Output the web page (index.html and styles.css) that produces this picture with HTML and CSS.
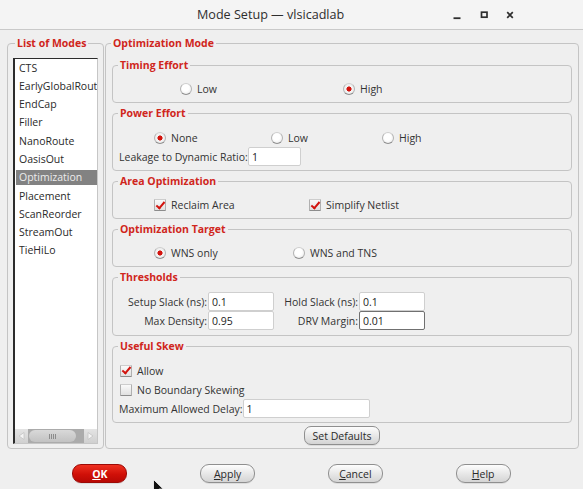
FILE: index.html
```html
<!DOCTYPE html>
<html lang="en">
<head>
<meta charset="utf-8">
<title>Mode Setup</title>
<link rel="stylesheet" href="styles.css">
</head>
<body>
<div class="window">
  <header class="titlebar">
    <div class="title">Mode Setup — vlsicadlab</div>
    <div class="controls">
      <svg class="ctl" width="16" height="16" viewBox="0 0 16 16"><path d="M4.5 11.2H11.5" stroke="#2e2e2e" stroke-width="1.8"/></svg>
      <svg class="ctl" width="16" height="16" viewBox="0 0 16 16"><rect x="5.5" y="5.2" width="5.5" height="5" fill="none" stroke="#2e2e2e" stroke-width="1.7"/></svg>
      <svg class="ctl" width="16" height="16" viewBox="0 0 16 16"><path d="M5.2 5.2L10.8 10.8M10.8 5.2L5.2 10.8" stroke="#2e2e2e" stroke-width="1.7"/></svg>
    </div>
  </header>

  <main class="content">
    <fieldset class="group modes">
      <legend>List of Modes</legend>
      <div class="listbox">
        <ul class="items">
          <li>CTS</li>
          <li>EarlyGlobalRoute</li>
          <li>EndCap</li>
          <li>Filler</li>
          <li>NanoRoute</li>
          <li>OasisOut</li>
          <li class="selected">Optimization</li>
          <li>Placement</li>
          <li>ScanReorder</li>
          <li>StreamOut</li>
          <li>TieHiLo</li>
        </ul>
        <div class="hscroll">
          <div class="arrow"><svg width="7" height="8" viewBox="0 0 7 8"><path d="M6 0.5L1 4L6 7.5Z" fill="#f4f4f4" stroke="#c4c4c4" stroke-width="0.8"/></svg></div>
          <div class="track"><div class="thumb"><span class="grip"></span></div></div>
          <div class="arrow"><svg width="7" height="8" viewBox="0 0 7 8"><path d="M1 0.5L6 4L1 7.5Z" fill="#f4f4f4" stroke="#c4c4c4" stroke-width="0.8"/></svg></div>
        </div>
      </div>
    </fieldset>

    <fieldset class="group optmode">
      <legend>Optimization Mode</legend>

      <fieldset class="sub first">
        <legend>Timing Effort</legend>
        <div class="row opts timing">
          <span class="radio">Low</span>
          <span class="radio on">High</span>
        </div>
      </fieldset>

      <fieldset class="sub tall">
        <legend>Power Effort</legend>
        <div class="row opts power">
          <span class="radio on">None</span>
          <span class="radio">Low</span>
          <span class="radio">High</span>
        </div>
        <div class="row form">
          <label class="lbl leak">Leakage to Dynamic Ratio:</label>
          <input class="field w-leak" value="1">
        </div>
      </fieldset>

      <fieldset class="sub">
        <legend>Area Optimization</legend>
        <div class="row opts area">
          <span class="check on">Reclaim Area</span>
          <span class="check on">Simplify Netlist</span>
        </div>
      </fieldset>

      <fieldset class="sub">
        <legend>Optimization Target</legend>
        <div class="row opts target">
          <span class="radio on">WNS only</span>
          <span class="radio">WNS and TNS</span>
        </div>
      </fieldset>

      <fieldset class="sub thresholds">
        <legend>Thresholds</legend>
        <div class="grid4">
          <label class="lbl r">Setup Slack (ns):</label>
          <input class="field" value="0.1">
          <label class="lbl r">Hold Slack (ns):</label>
          <input class="field" value="0.1">
          <label class="lbl r">Max Density:</label>
          <input class="field" value="0.95">
          <label class="lbl r">DRV Margin:</label>
          <input class="field focused" value="0.01">
        </div>
      </fieldset>

      <fieldset class="sub skew">
        <legend>Useful Skew</legend>
        <div class="row stack"><span class="check on">Allow</span></div>
        <div class="row stack"><span class="check">No Boundary Skewing</span></div>
        <div class="row form">
          <label class="lbl delay">Maximum Allowed Delay:</label>
          <input class="field w-delay" value="1">
        </div>
      </fieldset>

      <div class="defaults">
        <button class="btn small">Set Defaults</button>
      </div>
    </fieldset>
  </main>

  <footer class="buttons">
    <div class="cell"><button class="btn primary"><u>O</u>K</button></div>
    <div class="cell"><button class="btn"><u>A</u>pply</button></div>
    <div class="cell"><button class="btn"><u>C</u>ancel</button></div>
    <div class="cell"><button class="btn"><u>H</u>elp</button></div>
  </footer>

  <svg class="cursor" width="12" height="18" viewBox="0 0 12 18"><path d="M0.5 0.5V14L3.8 10.9L6.2 16.4L8.3 15.5L5.9 10.1H10.3Z" fill="#111" stroke="#fff" stroke-width="0.8"/></svg>
</div>
</body>
</html>
```

FILE: styles.css
```css
* { box-sizing: border-box; }

html, body {
  margin: 0;
  padding: 0;
}

body {
  width: 583px;
  height: 489px;
  overflow: hidden;
  background: #efefef;
  font-family: "Open Sans", "Noto Sans", sans-serif;
  font-size: 10.5px;
  color: #333;
}

.window {
  position: relative;
  height: 489px;
}

/* ---------- title bar ---------- */
.titlebar {
  height: 30px;
  display: flex;
  align-items: center;
  background: #f4f4f4;
  border-bottom: 1px solid #c9c9c9;
}

.title {
  margin-left: 197px;
  font-size: 12.6px;
  color: #2e2e2e;
}

.controls {
  margin-left: auto;
  margin-right: 65px;
  display: flex;
  gap: 10.5px;
}

.ctl { display: block; }

/* ---------- main ---------- */
.content {
  display: flex;
  gap: 1px;
  padding: 6px 0 0 7px;
}

fieldset {
  margin: 0;
  padding: 0;
  min-width: 0;
  border: 1px solid #c4c4c4;
  border-radius: 4px;
}

legend {
  padding: 0 2px;
  margin-left: 5px;
  line-height: 14px;
  font-weight: bold;
  color: #d0261c;
}

.group {
  height: 413px;
}

.modes { width: 97px; }
.modes > legend { margin-left: 7px; }

.optmode { width: 474px; }

/* ---------- list box ---------- */
.listbox {
  margin: 8px 5px 0 5px;
  height: 386px;
  display: flex;
  flex-direction: column;
  background: #fff;
  border-top: 1px solid #2c2c2c;
  border-left: 2px solid #2c2c2c;
  border-right: 1px solid #c6c6c6;
  border-bottom: 1px solid #c6c6c6;
}

.items {
  flex: 1;
  list-style: none;
  margin: 0;
  padding: 1.5px 0 0 0;
  overflow: hidden;
}

.items li {
  height: 15px;
  line-height: 15px;
  margin: 0 0 3.3px 1px;
  padding-left: 3px;
  white-space: nowrap;
  color: #2a2a2a;
}

.items li.selected {
  background: #828282;
  color: #ececec;
}

.hscroll {
  height: 14px;
  display: flex;
}

.arrow {
  width: 13px;
  display: flex;
  align-items: center;
  justify-content: center;
  background: linear-gradient(#e4e4e4, #d0d0d0);
}

.track {
  flex: 1;
  display: flex;
  padding: 1px 0;
  background: #ababab;
}

.thumb {
  width: 47px;
  margin-left: 1px;
  border-radius: 6px;
  background: linear-gradient(#d9d9d9, #c2c2c2);
  display: flex;
  align-items: center;
  justify-content: center;
}

.grip {
  width: 8px;
  height: 5px;
  background: repeating-linear-gradient(90deg, #8c8c8c 0 1px, transparent 1px 2px);
}

/* ---------- sub groups ---------- */
.sub {
  margin: 3px 6px 0 6px;
  padding: 8px 0 4px 0;
}

.sub.first { margin-top: 8px; }
.sub.thresholds { padding-bottom: 5px; }

.row {
  height: 18px;
  display: flex;
  align-items: center;
  white-space: nowrap;
}

.tall .row,
.skew .row { height: 19px; }

.opts { display: grid; align-items: center; }
.timing { padding-left: 67px; grid-template-columns: 163px auto; }
.power  { padding-left: 41px; grid-template-columns: 117px 111px auto; }
.area   { padding-left: 41px; grid-template-columns: 155px auto; }
.target { padding-left: 41px; grid-template-columns: 139px auto; }

.stack { padding-left: 7px; }
.form  { padding-left: 6px; }

/* radio */
.radio {
  display: inline-flex;
  align-items: center;
  gap: 5px;
}

.radio::before {
  content: "";
  width: 10px;
  height: 10px;
  border-radius: 50%;
  border: 1px solid;
  border-color: #cfcfcf #b4b4b4 #8f8f8f #b4b4b4;
  background: radial-gradient(circle at 45% 40%, #ffffff 40%, #e4e4e4);
}

.radio.on::before {
  background: radial-gradient(circle at 50% 50%, #d2140e 0 2.2px, #f5f5f5 2.9px, #e2e2e2);
}

/* checkbox */
.check {
  position: relative;
  display: inline-flex;
  align-items: center;
  gap: 5px;
}

.check::before {
  content: "";
  width: 10px;
  height: 10px;
  border: 1px solid;
  border-color: #cdcdcd #b0b0b0 #8c8c8c #b0b0b0;
  border-radius: 1px;
  background: linear-gradient(#fafafa, #e0e0e0);
}

.check.on::after {
  content: "";
  position: absolute;
  left: 3.5px;
  top: 50%;
  width: 3px;
  height: 7px;
  margin-top: -5.5px;
  border-right: 2px solid #d2140e;
  border-bottom: 2px solid #d2140e;
  transform: rotate(40deg);
}

/* form fields */
.lbl {
  display: block;
  white-space: nowrap;
  text-align: right;
  padding-right: 1px;
}

.leak  { width: 129px; }
.delay { width: 123.5px; }

.field {
  height: 19px;
  margin: 0;
  padding: 0 3px;
  border: 1px solid #cfcfcf;
  border-radius: 2px;
  background: #fff;
  font: inherit;
  color: #222;
  outline: none;
}

.field.focused { border-color: #707070; }

.w-leak  { width: 53px; }
.w-delay { width: 127px; }

.grid4 {
  display: grid;
  grid-template-columns: 95px 66px 85px 66px;
  grid-auto-rows: 19px;
  align-items: center;
}

.grid4 .field { width: 66px; }

/* ---------- buttons ---------- */
.defaults {
  display: flex;
  justify-content: center;
  margin-top: 3px;
}

.btn {
  width: 55px;
  height: 19px;
  padding: 0;
  font: inherit;
  font-size: 10.5px;
  color: #2a2a2a;
  border: 1px solid #8f8f8f;
  border-radius: 9px;
  background: linear-gradient(#fdfdfd, #e6e6e6 55%, #d4d4d4);
  box-shadow: 0 1px 0 rgba(0,0,0,0.08);
}

.btn.small {
  width: 76px;
  border-radius: 7px;
}

.btn.primary {
  color: #fff;
  font-weight: bold;
  border-color: #9c0a06;
  background: linear-gradient(#ee3020, #d01008 55%, #b80804);
}

.buttons {
  display: flex;
  padding: 15px 36px 0 36px;
}

.cell {
  flex: 1;
  display: flex;
  justify-content: center;
}

/* mouse pointer over the dialog */
.cursor {
  position: absolute;
  left: 153px;
  top: 479px;
}
```
